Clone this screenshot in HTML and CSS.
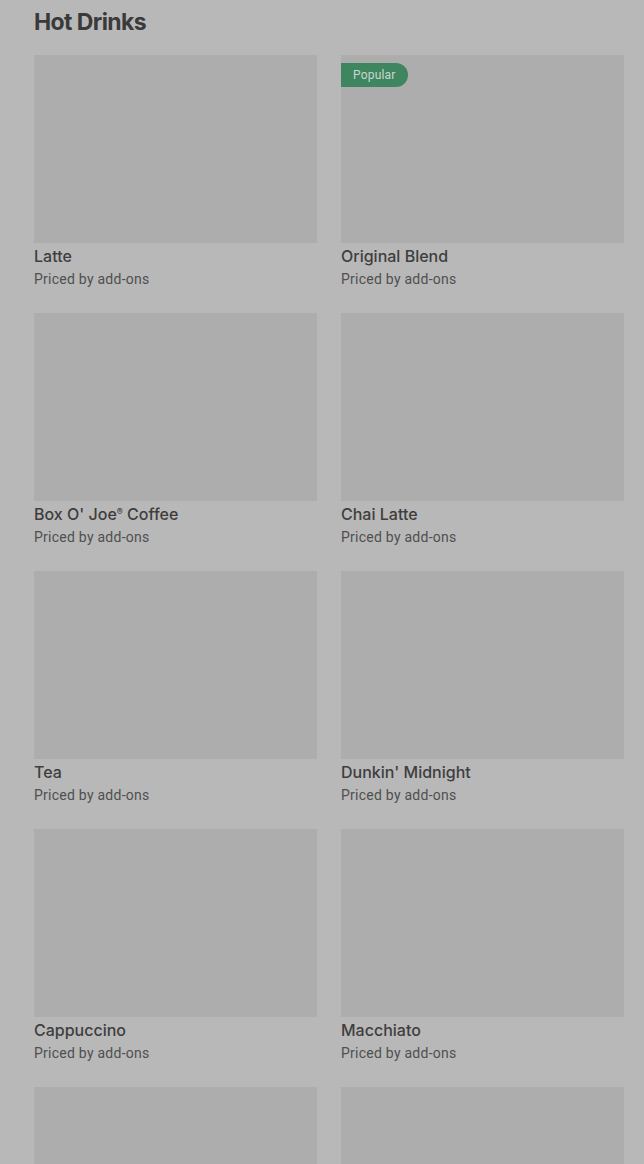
FILE: index.html
```html
<!DOCTYPE html>
<html lang="en">
<head>
<meta charset="utf-8">
<title>Hot Drinks</title>
<link rel="stylesheet" href="styles.css">
</head>
<body>
<main class="section">
  <h2 class="section-title">Hot Drinks</h2>
  <div class="grid">
    <div class="card"><div class="thumb"></div><div class="name">Latte</div><div class="price">Priced by add-ons</div></div>
    <div class="card"><div class="thumb"><span class="badge">Popular</span></div><div class="name">Original Blend</div><div class="price">Priced by add-ons</div></div>
    <div class="card"><div class="thumb"></div><div class="name">Box O' Joe<span class="reg">®</span> Coffee</div><div class="price">Priced by add-ons</div></div>
    <div class="card"><div class="thumb"></div><div class="name">Chai Latte</div><div class="price">Priced by add-ons</div></div>
    <div class="card"><div class="thumb"></div><div class="name">Tea</div><div class="price">Priced by add-ons</div></div>
    <div class="card"><div class="thumb"></div><div class="name">Dunkin' Midnight</div><div class="price">Priced by add-ons</div></div>
    <div class="card"><div class="thumb"></div><div class="name">Cappuccino</div><div class="price">Priced by add-ons</div></div>
    <div class="card"><div class="thumb"></div><div class="name">Macchiato</div><div class="price">Priced by add-ons</div></div>
    <div class="card"><div class="thumb"></div></div>
    <div class="card"><div class="thumb"></div></div>
  </div>
</main>
</body>
</html>
```
FILE: styles.css
```css
html, body {
  margin: 0;
  padding: 0;
  background: #b8b8b8;
  overflow: hidden;
}
.section {
  padding: 8px 20px 0 34px;
  font-family: Roboto, "Liberation Sans", sans-serif;
}
.section-title {
  margin: 0 0 19px 0;
  font-family: Inter, "Liberation Sans", sans-serif;
  font-size: 23px;
  line-height: 28px;
  font-weight: 700;
  letter-spacing: -0.6px;
  color: #3a3a3a;
}
.grid {
  display: grid;
  grid-template-columns: 283px 283px;
  column-gap: 24px;
  row-gap: 24px;
}
.card {
  display: flex;
  flex-direction: column;
}
.thumb {
  position: relative;
  height: 188px;
  background: #adadad;
}
.badge {
  position: absolute;
  left: 0;
  top: 8px;
  height: 24px;
  padding: 0 12px;
  display: flex;
  align-items: center;
  background: #3f8560;
  color: #c9d9cf;
  font-size: 12px;
  letter-spacing: 0.2px;
  border-radius: 0 12px 12px 0;
}
.name {
  margin-top: 2px;
  font-family: Inter, "Liberation Sans", sans-serif;
  font-size: 16px;
  line-height: 22px;
  font-weight: 500;
  color: #3e3e3e;
}
.reg {
  font-size: 9px;
  vertical-align: 5px;
  line-height: 0;
}
.price {
  margin-top: 2px;
  font-size: 14px;
  line-height: 20px;
  letter-spacing: 0.25px;
  color: #4f4f4f;
}
```
